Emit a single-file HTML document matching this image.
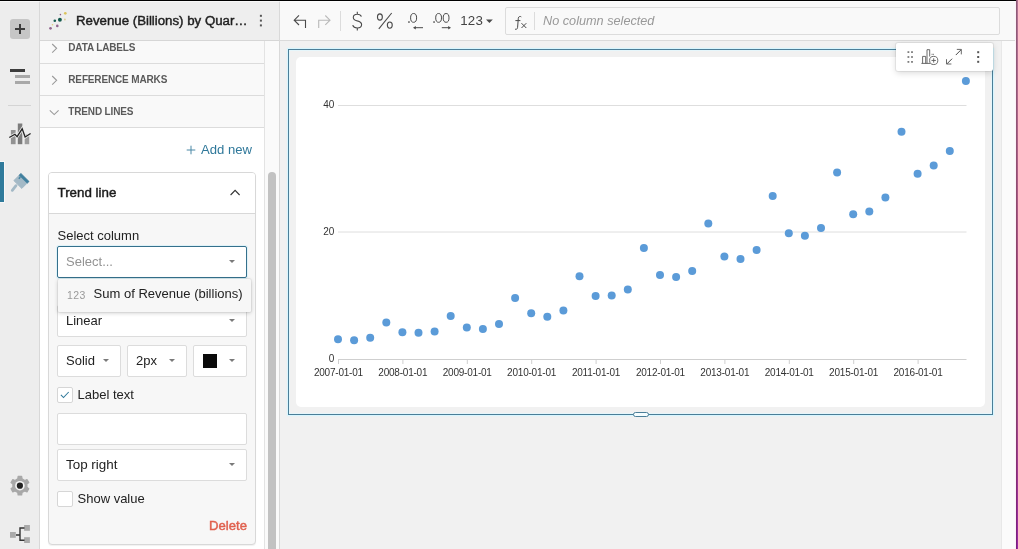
<!DOCTYPE html>
<html lang="en">
<head>
<meta charset="utf-8">
<title>Revenue (Billions) by Quarter</title>
<style>
*{box-sizing:border-box;margin:0;padding:0}
html,body{width:1018px;height:549px;overflow:hidden;background:#f1f1f1}
body{will-change:transform;font-family:"Liberation Sans",sans-serif;font-size:13px;color:#222;position:relative}
.abs{position:absolute}
svg{position:absolute;overflow:visible}
#topline{left:0;top:0;width:1018px;height:1px;background:#000;z-index:50}
#topwhite{left:0;top:1px;width:1016px;height:1px;background:#fff;opacity:.6;z-index:49}
#edgeA{left:1015px;top:1px;width:1px;height:548px;background:#fdf1f8;z-index:50}
#edgeB{left:1016px;top:0;width:1px;height:549px;background:linear-gradient(#8e5c78,#905474 25%,#8a4068 50%,#84406c 75%,#842c74 86%,#781e80);z-index:51}
#edgeC{left:1017px;top:0;width:1px;height:549px;background:linear-gradient(#b27494,#b06488 25%,#a85080 50%,#a64888 75%,#a03890 86%,#9828a0);z-index:51}

/* left icon rail */
#rail{left:0;top:1px;width:40px;height:548px;background:#ededed;border-right:1px solid #d8d8d8}
#plus{left:10px;top:18px;width:20px;height:20px;background:#c6c6c6;border-radius:3px}
#railsep{left:8px;top:104px;width:23px;height:1px;background:#d4d4d4}
#active{left:0;top:161px;width:4px;height:40px;background:#2f7a9b;box-shadow:0 0 0 1px rgba(255,255,255,.55)}

/* side panel */
#panel{left:40px;top:1px;width:240px;height:548px;background:#fff;border-right:1px solid #d9d9d9}
#phead{left:0;top:0;width:239px;height:40px;background:#eee;border-bottom:1px solid #d6d6d6;z-index:5}
#ptitle{left:36px;top:12px;font-weight:400;-webkit-text-stroke:.45px #1f1f1f;font-size:13.250px;color:#1f1f1f;white-space:nowrap;letter-spacing:0}
.row{left:0;width:224px;height:32px;background:#f9f9f9;border-bottom:1px solid #dcdcdc}
.row span{position:absolute;left:28.300px;top:10px;font-size:10px;font-weight:700;color:#5a5a5a;letter-spacing:-.150px;white-space:nowrap}
#gutter{left:224px;top:40px;width:15px;height:508px;background:#fafafa;border-left:1px solid #e3e3e3}
#thumb{left:228px;top:171px;width:8px;height:400px;background:#c2c2c2;border-radius:4px}
#addnew{left:161px;top:141px;color:#2f789a;font-size:13.1px;white-space:nowrap}
#card{left:8px;top:171px;width:208px;height:373px;border:1px solid #d8d8d8;border-radius:4px;background:#f7f7f7;box-shadow:0 1px 1px rgba(0,0,0,.06)}
#chead{left:0;top:0;width:206px;height:41px;background:#fff;border-bottom:1px solid #d8d8d8;border-radius:3px 3px 0 0}
#chead b{position:absolute;left:8.500px;top:11.500px;font-weight:400;-webkit-text-stroke:.45px #1c1c1c;font-size:13.350px;color:#1c1c1c;white-space:nowrap}
.lbl{white-space:nowrap;color:#222;font-size:13px}
.box{background:#fff;border:1px solid #dcdcdc;border-radius:2px;height:32px}
.box span{position:absolute;left:8px;top:7px;white-space:nowrap;font-size:13px;color:#222}
.caret{width:0;height:0;border-left:3.800px solid transparent;border-right:3.800px solid transparent;border-top:3.700px solid #7a7a7a;margin-top:-.500px;margin-left:.800px}
.chk{width:16px;height:16px;background:#fff;border:1px solid #d6d6d6;border-radius:2px}
#pop{left:18px;top:278px;width:193px;height:33px;background:#f7f7f7;border-radius:1.500px;box-shadow:0 1px 4px rgba(0,0,0,.2),0 0 0 1px rgba(0,0,0,.04);z-index:6}

/* toolbar */
#tb{left:280px;top:1px;width:736px;height:40px;background:#f9f9f9;border-bottom:1px solid #dadada}
#fbox{left:225px;top:6px;width:495px;height:28px;border:1px solid #dcdcdc;border-radius:2px;background:#f9f9f9}
#ftext{left:37px;top:6px;font-style:italic;color:#999;font-size:12.7px;white-space:nowrap}
#t123{left:180.300px;top:12px;font-size:13.300px;color:#444;letter-spacing:.150px;white-space:nowrap}

/* canvas */
#vscroll{left:1001px;top:41px;width:15px;height:508px;background:#fbfbfb;border-left:1px solid #e8e8e8}
#el{left:288px;top:49px;width:705px;height:366px;border:1px solid #4b7e98;box-shadow:0 0 0 1px rgba(214,246,255,.9),0 0 1.500px 1.500px rgba(205,242,255,.45),inset 0 0 0 1px rgba(224,248,255,.7)}
#plot{left:296px;top:57px;width:689px;height:350px;background:#fff;border-radius:5px}
#handle{left:633px;top:412px;width:16px;height:5px;border:1px solid #4b7e98;border-radius:3px;background:#f4fdff}
#float{left:896px;top:43px;width:97px;height:28px;background:#fff;border-radius:2px;box-shadow:0 2px 6px rgba(0,0,0,.15),0 0 0 1px rgba(0,0,0,.06);z-index:8}
.ax{font-family:"Liberation Sans",sans-serif;font-size:10px;fill:#333}
</style>
</head>
<body>

<!-- canvas -->
<div class="abs" id="vscroll"></div>
<div class="abs" id="el"></div>
<div class="abs" id="plot">
<svg width="689" height="350" viewBox="0 0 689 350" style="left:0;top:0">
  <g stroke="#dedede" stroke-width="1">
    <line x1="42" x2="670.500" y1="48.500" y2="48.500"/>
    <line x1="42" x2="670.500" y1="175" y2="175"/>
  </g>
  <g stroke="#cfcfcf" stroke-width="1">
    <line x1="42" x2="670.500" y1="302.500" y2="302.500"/>
<line x1="42.5" x2="42.5" y1="302" y2="307"/>
<line x1="106.9" x2="106.9" y1="302" y2="307"/>
<line x1="171.3" x2="171.3" y1="302" y2="307"/>
<line x1="235.7" x2="235.7" y1="302" y2="307"/>
<line x1="300.1" x2="300.1" y1="302" y2="307"/>
<line x1="364.5" x2="364.5" y1="302" y2="307"/>
<line x1="428.9" x2="428.9" y1="302" y2="307"/>
<line x1="493.3" x2="493.3" y1="302" y2="307"/>
<line x1="557.7" x2="557.7" y1="302" y2="307"/>
<line x1="622.1" x2="622.1" y1="302" y2="307"/>
  </g>
  <g class="ax" text-anchor="end">
    <text x="38.400" y="50.800">40</text>
    <text x="38.400" y="178.400">20</text>
    <text x="38.400" y="304.700">0</text>
  </g>
  <g class="ax" text-anchor="middle" style="font-size:10px;letter-spacing:-.220px">
<text x="42.4" y="319.200">2007-01-01</text>
<text x="106.8" y="319.200">2008-01-01</text>
<text x="171.2" y="319.200">2009-01-01</text>
<text x="235.6" y="319.200">2010-01-01</text>
<text x="300.0" y="319.200">2011-01-01</text>
<text x="364.4" y="319.200">2012-01-01</text>
<text x="428.8" y="319.200">2013-01-01</text>
<text x="493.2" y="319.200">2014-01-01</text>
<text x="557.6" y="319.200">2015-01-01</text>
<text x="622.0" y="319.200">2016-01-01</text>
  </g>
  <g fill="#5b9bd8">
<circle cx="42.0" cy="282.3" r="4"/>
<circle cx="58.1" cy="283.2" r="4"/>
<circle cx="74.2" cy="280.8" r="4"/>
<circle cx="90.3" cy="265.5" r="4"/>
<circle cx="106.4" cy="275.3" r="4"/>
<circle cx="122.5" cy="275.7" r="4"/>
<circle cx="138.6" cy="274.5" r="4"/>
<circle cx="154.7" cy="259.0" r="4"/>
<circle cx="170.8" cy="270.5" r="4"/>
<circle cx="186.9" cy="272.0" r="4"/>
<circle cx="203.0" cy="266.9" r="4"/>
<circle cx="219.1" cy="241.1" r="4"/>
<circle cx="235.2" cy="256.3" r="4"/>
<circle cx="251.3" cy="259.8" r="4"/>
<circle cx="267.4" cy="253.5" r="4"/>
<circle cx="283.5" cy="219.3" r="4"/>
<circle cx="299.6" cy="238.9" r="4"/>
<circle cx="315.7" cy="238.6" r="4"/>
<circle cx="331.8" cy="232.5" r="4"/>
<circle cx="347.9" cy="190.9" r="4"/>
<circle cx="364.0" cy="217.9" r="4"/>
<circle cx="380.1" cy="220.1" r="4"/>
<circle cx="396.2" cy="213.9" r="4"/>
<circle cx="412.3" cy="166.5" r="4"/>
<circle cx="428.4" cy="199.5" r="4"/>
<circle cx="444.5" cy="201.9" r="4"/>
<circle cx="460.6" cy="193.1" r="4"/>
<circle cx="476.7" cy="139.1" r="4"/>
<circle cx="492.8" cy="176.2" r="4"/>
<circle cx="508.9" cy="178.8" r="4"/>
<circle cx="525.0" cy="170.9" r="4"/>
<circle cx="541.1" cy="115.4" r="4"/>
<circle cx="557.2" cy="157.3" r="4"/>
<circle cx="573.3" cy="154.4" r="4"/>
<circle cx="589.4" cy="140.6" r="4"/>
<circle cx="605.5" cy="74.7" r="4"/>
<circle cx="621.6" cy="116.7" r="4"/>
<circle cx="637.7" cy="108.6" r="4"/>
<circle cx="653.8" cy="94.0" r="4"/>
<circle cx="669.9" cy="24.0" r="4"/>
  </g>
</svg>
</div>
<div class="abs" id="handle"></div>
<div class="abs" id="float">
  <svg width="97" height="28" viewBox="0 0 97 28" style="left:0;top:0">
    <g fill="#7d7d7d">
      <rect x="11.500" y="8.200" width="1.800" height="1.800"/><rect x="15.100" y="8.200" width="1.800" height="1.800"/>
      <rect x="11.500" y="13.100" width="1.800" height="1.800"/><rect x="15.100" y="13.100" width="1.800" height="1.800"/>
      <rect x="11.500" y="18" width="1.800" height="1.800"/><rect x="15.100" y="18" width="1.800" height="1.800"/>
    </g>
    <g fill="none" stroke="#5a5a5a" stroke-width=".9">
      <path d="M25.400 20.400H34.200 M26.600 20.400V13.400H29.700V20.400 M31 20.400V6.700H33.700V13.500"/>
      <circle cx="37.700" cy="17.450" r="4.100" fill="#fff"/>
      <path d="M35.500 17.450H39.900 M37.700 15.250V19.650"/>
      <path d="M35.600 11.300h0.900M36.900 11.300h0.900" stroke-width="1"/>
    </g>
    <g fill="none" stroke="#4a4a4a" stroke-width="1">
      <path d="M59.800 12.050L65.200 6.650 M56.100 15.700L50.700 21.100"/>
      <path d="M60.800 6.400H65.300V11.400 M50.500 16.200V21H55.400" stroke="#6a6a6a"/>
    </g>
    <g fill="#555">
      <rect x="81.2" y="8.2" width="2" height="2"/>
      <rect x="81.2" y="13" width="2" height="2"/>
      <rect x="81.2" y="17.8" width="2" height="2"/>
    </g>
  </svg>
</div>

<!-- toolbar -->
<div class="abs" id="tb">
  <svg width="225" height="40" viewBox="0 0 225 40" style="left:0;top:0">
    <g fill="none" stroke="#4a4a4a" stroke-width="1.100">
      <path d="M19 14.400L14.200 19.200L19 24 M14.500 19.200H25.500V27"/>
    </g>
    <g fill="none" stroke="#b9b9b9" stroke-width="1.100">
      <path d="M45.3 14.5L50 19.2L45.3 23.9 M49.7 19.2H38.7V27"/>
    </g>
    <rect x="60" y="10" width="1" height="20" fill="#dcdcdc"/>
    <g fill="none" stroke="#4a4a4a" stroke-width="1.100">
      <path d="M81.400 15.600C80.800 13.900 79.300 13.200 77.300 13.200C75 13.200 73.300 14.400 73.300 16.400C73.300 18.400 74.900 19.200 77.300 19.900C80 20.600 81.600 21.500 81.600 23.600C81.600 25.700 79.800 27 77.300 27C74.900 27 73.300 26 72.700 24.200 M77.300 10.800V13.200 M77.300 27V29.400"/>
      <ellipse cx="99.900" cy="16" rx="2.450" ry="3.100"/>
      <ellipse cx="109.800" cy="24.100" rx="2.450" ry="3.100"/>
      <path d="M111.700 12L98.800 27.800"/>
    </g>
    <g fill="none" stroke="#4a4a4a" stroke-width="1">
      <ellipse cx="133.600" cy="16.900" rx="3" ry="4.400"/>
      <path d="M135 26.700H143"/>
      <ellipse cx="158.600" cy="16.900" rx="2.900" ry="4.400"/>
      <ellipse cx="166.100" cy="16.900" rx="2.900" ry="4.400"/>
      <path d="M161.800 26.700H169.500"/>
    </g>
    <path d="M133 26.700L135.800 25V28.400Z M171 26.700L168.200 25V28.400Z" fill="#4a4a4a"/>
    <rect x="128.200" y="20.300" width="1.500" height="1.500" fill="#4a4a4a"/>
    <rect x="153.300" y="20.300" width="1.500" height="1.500" fill="#4a4a4a"/>
    <path d="M206 18.500h6.800l-3.400 3.600z" fill="#4a4a4a"/>
  </svg>
  <div class="abs" id="t123">123</div>
  <div class="abs" id="fbox">
    <svg width="30" height="26" viewBox="0 0 30 26" style="left:0;top:0">
      <g fill="none" stroke="#4a4a4a" stroke-width="1">
        <path d="M15.300 8.900C14.500 8.100 12.500 8.200 12.300 10.300L11.600 19.300C11.400 21.200 10.300 21.700 9 21.100 M9.400 12.600H14.400"/>
        <path d="M15.500 15.200L20.300 20 M20.300 15.200L15.500 20"/>
      </g>
      <rect x="28" y="4" width="1" height="18" fill="#dcdcdc"/>
    </svg>
    <div class="abs" id="ftext">No column selected</div>
  </div>
</div>

<!-- side panel -->
<div class="abs" id="panel">
  <div class="abs row" style="top:31px"><span>DATA LABELS</span></div>
  <div class="abs row" style="top:63px"><span>REFERENCE MARKS</span></div>
  <div class="abs row" style="top:95px"><span>TREND LINES</span></div>
  <svg width="30" height="128" viewBox="0 0 30 128" style="left:0;top:0">
    <g fill="none" stroke="#9a9a9a" stroke-width="1.100">
      <path d="M12.200 43L16.600 47.300L12.200 51.600"/>
      <path d="M12.200 75L16.600 79.300L12.200 83.600"/>
      <path d="M9.800 109.300L14.200 113.600L18.600 109.300"/>
    </g>
  </svg>
  <div class="abs" id="gutter"></div>
  <div class="abs" id="thumb"></div>
  <div class="abs" id="addnew"><svg width="10" height="10" viewBox="0 0 10 10" style="left:-14.600px;top:3.300px"><path d="M0.700 5H9.300M5 0.700V9.300" stroke="#4b88a6" stroke-width="1" fill="none"/></svg>Add new</div>

  <div class="abs" id="card">
    <div class="abs" id="chead"><b>Trend line</b>
      <svg width="20" height="12" viewBox="0 0 20 12" style="left:178px;top:14px"><path d="M3.600 8L8.100 3.400L12.600 8" fill="none" stroke="#333" stroke-width="1.100"/></svg>
    </div>
    <div class="abs lbl" style="left:8.500px;top:55px">Select column</div>
    <div class="abs box" style="left:8px;top:73px;width:190px;border-color:#35708c;box-shadow:0 0 0 1px rgba(200,238,250,.5)"><span style="color:#939393">Select...</span><i class="abs caret" style="left:170px;top:13.500px"></i></div>
    <div class="abs box" style="left:8px;top:132px;width:190px"><span>Linear</span><i class="abs caret" style="left:170px;top:13.500px"></i></div>
    <div class="abs box" style="left:8px;top:172px;width:64px"><span>Solid</span><i class="abs caret" style="left:44px;top:13.500px"></i></div>
    <div class="abs box" style="left:78px;top:172px;width:60px"><span>2px</span><i class="abs caret" style="left:40px;top:13.500px"></i></div>
    <div class="abs box" style="left:144px;top:172px;width:54px"><div class="abs" style="left:8.600px;top:7.700px;width:14.600px;height:14.500px;background:#0a0a0a"></div><i class="abs caret" style="left:34px;top:13.500px"></i></div>
    <div class="abs chk" style="left:8px;top:214px"><svg width="14" height="14" viewBox="0 0 14 14" style="left:0;top:0"><path d="M2.900 6.900L5.500 9.500L10.700 4" fill="none" stroke="#2f789a" stroke-width="1.050"/></svg></div>
    <div class="abs lbl" style="left:28.500px;top:213.500px">Label text</div>
    <div class="abs box" style="left:8px;top:240px;width:190px"></div>
    <div class="abs box" style="left:8px;top:276px;width:190px"><span style="font-size:13.400px">Top right</span><i class="abs caret" style="left:170px;top:13.500px"></i></div>
    <div class="abs chk" style="left:8px;top:318px"></div>
    <div class="abs lbl" style="left:28.500px;top:317.500px">Show value</div>
    <div class="abs" style="left:160px;top:345px;font-weight:400;-webkit-text-stroke:.45px #e0614e;font-size:13.150px;color:#e0614e;white-space:nowrap">Delete</div>
  </div>

  <div class="abs" id="pop">
    <span class="abs" style="left:9px;top:9.500px;font-size:10.500px;color:#9a9a9a;letter-spacing:.4px">123</span>
    <span class="abs" style="left:35.600px;top:7.400px;font-size:13.030px;color:#222;white-space:nowrap">Sum of Revenue (billions)</span>
  </div>

  <div class="abs" id="phead">
    <svg width="36" height="40" viewBox="0 0 36 40" style="left:0;top:0">
      <circle cx="10.500" cy="27.300" r="1.350" fill="#92668f"/>
      <circle cx="17.300" cy="24.900" r="1.300" fill="#92668f"/>
      <circle cx="12.500" cy="23.700" r="0.800" fill="#dccb7c"/>
      <circle cx="14.800" cy="19.800" r="1.300" fill="#155a4e"/>
      <circle cx="19.900" cy="18.700" r="1.950" fill="#155a4e"/>
      <circle cx="20.400" cy="13.600" r="0.800" fill="#8a5c86"/>
      <circle cx="24.900" cy="18.500" r="0.900" fill="#d8cc94"/>
      <circle cx="25.300" cy="12.300" r="1.350" fill="#dcc45e"/>
    </svg>
    <div class="abs" id="ptitle">Revenue (Billions) by Quar…</div>
    <svg width="10" height="40" viewBox="0 0 10 40" style="left:216px;top:0"><g fill="#555"><rect x="3.900" y="13.800" width="2" height="2"/><rect x="3.900" y="18.600" width="2" height="2"/><rect x="3.900" y="23.400" width="2" height="2"/></g></svg>
  </div>
</div>

<!-- left rail -->
<div class="abs" id="rail">
  <div class="abs" id="plus"><svg width="20" height="20" viewBox="0 0 20 20" style="left:0;top:0"><path d="M5 10H15M10 5V15" stroke="#3c3c3c" stroke-width="2" fill="none"/></svg></div>
  <svg width="40" height="548" viewBox="0 0 40 548" style="left:0;top:0">
    <!-- list icon -->
    <rect x="10" y="68" width="15" height="3" fill="#3c3c3c"/>
    <rect x="15" y="74" width="15" height="3" fill="#a8a8a8"/>
    <rect x="15" y="80" width="15" height="3" fill="#a8a8a8"/>
    <!-- chart icon -->
    <rect x="10.900" y="129" width="4.700" height="14.200" fill="#929292"/>
    <rect x="17.800" y="122.500" width="4.500" height="20.700" fill="#7c7c7c"/>
    <rect x="24.700" y="133" width="4.500" height="10.200" fill="#9c9c9c"/>
    <path d="M9.300 136.500L14.900 133.300L17.100 135.600L22.200 127.800L25.100 136L30.600 132.500" fill="none" stroke="#ececec" stroke-width="3"/>
    <path d="M9.300 136.500L14.900 133.300L17.100 135.600L22.200 127.800L25.100 136L30.600 132.500" fill="none" stroke="#222" stroke-width="1.300"/>
    <!-- brush icon -->
    <g>
      <path d="M20.900 172.600L28.800 180.400L21.800 187.400L13.900 179.600Z" fill="#a3b9c6" stroke="#a3b9c6" stroke-width="1" stroke-linejoin="round"/>
      <path d="M20.900 172.400L29 180.500L27.200 182.300L19.100 174.200Z" fill="#3f7f9e" stroke="#3f7f9e" stroke-width=".6" stroke-linejoin="round"/>
      <path d="M19.600 175.200L18.300 177.600L19.600 178.300L20.900 176.300Z" fill="#4a86a3"/>
      <path d="M16 184.700L12.300 189.300" stroke="#a3b9c6" stroke-width="2.800" stroke-linecap="round" fill="none"/>
    </g>
    <!-- gear -->
    <g transform="translate(19.900,484.700)">
      <path d="M-2.11 -6.89L-1.79 -9.23L1.79 -9.23L2.11 -6.89L4.91 -5.27L7.09 -6.17L8.89 -3.06L7.02 -1.62L7.02 1.62L8.89 3.06L7.09 6.17L4.91 5.27L2.11 6.89L1.79 9.23L-1.79 9.23L-2.11 6.89L-4.91 5.27L-7.09 6.17L-8.89 3.06L-7.02 1.62L-7.02 -1.62L-8.89 -3.06L-7.09 -6.17L-4.91 -5.27Z" fill="#a8a8a8" stroke="#a8a8a8" stroke-width="1.200" stroke-linejoin="round"/>
      <circle r="4.800" fill="#f4f4f4"/>
      <circle r="3.100" fill="#222"/>
    </g>
    <!-- tree -->
    <g>
      <rect x="10" y="531" width="5.800" height="5.800" fill="#aaa"/>
      <rect x="24.100" y="524" width="5.800" height="5.800" fill="#aaa"/>
      <rect x="24.100" y="536.200" width="5.800" height="5.800" fill="#aaa"/>
      <path d="M16 534H20 M24.500 527H20V539.200H24.500" fill="none" stroke="#333" stroke-width="1.400"/>
    </g>
  </svg>
  <div class="abs" id="railsep"></div>
  <div class="abs" id="active"></div>
</div>

<div class="abs" id="topwhite"></div>
<div class="abs" id="topline"></div>
<div class="abs" id="edgeA"></div>
<div class="abs" id="edgeB"></div>
<div class="abs" id="edgeC"></div>
</body>
</html>
